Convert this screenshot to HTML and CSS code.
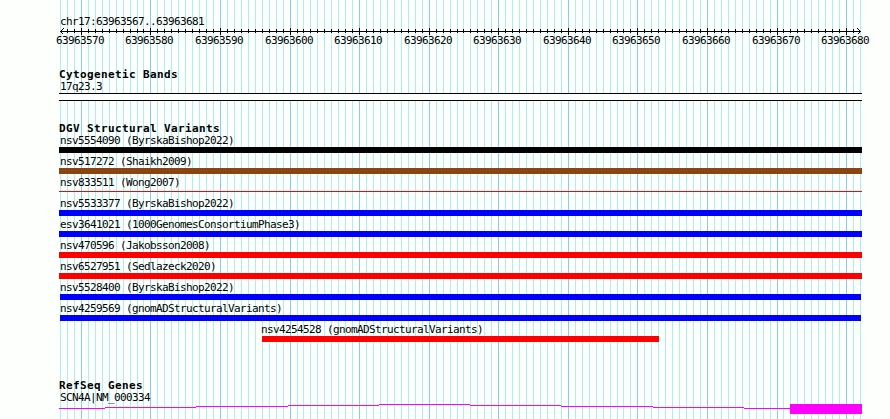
FILE: index.html
```html
<!DOCTYPE html>
<html lang="en">

<head>
    <meta charset="UTF-8" />
    <title>chr17:63963567..63963681</title>
    <link rel="stylesheet" href="styles.css">
</head>

<body>
    <div class="browser">
        <svg class="grid" width="890" height="419">
            <path id="gridMinor" class="grid-minor" />
            <path id="gridMajor" class="grid-major" />
        </svg>

        <div class="panel">
            <!-- Ruler -->
            <header class="ruler">
                <p class="label">chr17:63963567..63963681</p>
                <svg class="scale" width="831" height="9">
                    <path class="scale-line" d="M1 4.5H802" />
                    <path id="scaleTicks" class="scale-line" />
                    <path class="arrow" d="M4.5 1.5L1.5 4.5L4.5 7.5M798.5 1.5L801.5 4.5L798.5 7.5" />
                </svg>
                <svg class="numbers" id="numbers" width="831" height="13"></svg>
            </header>

            <!-- Cytogenetic Bands -->
            <section class="track bands">
                <h2>Cytogenetic Bands</h2>
                <p class="label">17q23.3</p>
                <div class="band"></div>
            </section>

            <!-- Structural Variants -->
            <section class="track variants">
                <h2>DGV Structural Variants</h2>
                <div class="feature">
                    <p class="label">nsv5554090 (ByrskaBishop2022)</p>
                    <div class="bar black"></div>
                </div>
                <div class="feature">
                    <p class="label">nsv517272 (Shaikh2009)</p>
                    <div class="bar brown"></div>
                </div>
                <div class="feature">
                    <p class="label">nsv833511 (Wong2007)</p>
                    <div class="bar thin"></div>
                </div>
                <div class="feature">
                    <p class="label">nsv5533377 (ByrskaBishop2022)</p>
                    <div class="bar blue"></div>
                </div>
                <div class="feature">
                    <p class="label">esv3641021 (1000GenomesConsortiumPhase3)</p>
                    <div class="bar blue"></div>
                </div>
                <div class="feature">
                    <p class="label">nsv470596 (Jakobsson2008)</p>
                    <div class="bar red"></div>
                </div>
                <div class="feature">
                    <p class="label">nsv6527951 (Sedlazeck2020)</p>
                    <div class="bar red"></div>
                </div>
                <div class="feature">
                    <p class="label">nsv5528400 (ByrskaBishop2022)</p>
                    <div class="bar blue inset"></div>
                </div>
                <div class="feature">
                    <p class="label">nsv4259569 (gnomADStructuralVariants)</p>
                    <div class="bar blue inset"></div>
                </div>
                <div class="feature partial">
                    <p class="label">nsv4254528 (gnomADStructuralVariants)</p>
                    <div class="bar red"></div>
                </div>
            </section>

            <!-- Genes -->
            <section class="track genes">
                <h2>RefSeq Genes</h2>
                <p class="label">SCN4A|NM_000334</p>
                <svg class="gene" width="803" height="10">
                    <path class="intron" d="M0 4.5H46M46 3.5H137M137 2.5H229M229 1.5H320M320 0.5H411M411 1.5H502M502 2.5H594M594 3.5H685M685 4.5H731" />
                    <rect class="exon" x="731" y="0" width="72" height="10" />
                </svg>
            </section>
        </div>
    </div>

    <script src="script.js"></script>
</body>

</html>
```
FILE: styles.css
```css
body {
    margin: 0;
    background-color: #fdfffc;
    color: #000;
    font-family: "DejaVu Sans Mono", monospace;
    font-size: 11px;
    line-height: 13px;
}

.browser {
    position: relative;
    width: 890px;
    height: 419px;
    overflow: hidden;
}

/* Vertical guides behind every track */
.grid {
    position: absolute;
    top: 0;
    left: 0;
}

.grid path {
    fill: none;
    stroke-width: 1;
    shape-rendering: crispEdges;
}

.grid-minor {
    stroke: #afeeee;
}

.grid-major {
    stroke: #87ceeb;
}

.panel {
    position: relative;
    padding: 15px 0 0 59px;
}

.panel svg {
    display: block;
}

h2,
.label {
    margin: 0;
    white-space: pre;
    height: 12px;
}

h2 {
    font-size: 11px;
    line-height: 13px;
    font-weight: bold;
    letter-spacing: 0.377px;
}

.label {
    padding-left: 1px;
    letter-spacing: -0.622px;
}

/* Ruler */
.ruler {
    height: 53px;
}

.scale {
    shape-rendering: crispEdges;
}

.scale-line,
.arrow {
    fill: none;
    stroke: #000;
}

.numbers {
    overflow: visible;
    letter-spacing: -0.622px;
}

/* Tracks */
.track {
    width: 803px;
}

.bands {
    height: 54px;
}

.band {
    height: 6px;
    margin-top: 1px;
    border-top: 1px solid #000;
    border-bottom: 1px solid #000;
    background-color: #fdfffc;
}

.variants {
    height: 257px;
}

.feature {
    height: 21px;
}

.bar {
    height: 6px;
    margin-top: 1px;
}

.black {
    background-color: #000;
}

.brown {
    background-color: #8b4513;
}

.blue {
    background-color: #00f;
}

.red {
    background-color: #f00;
}

.thin {
    height: 1px;
    margin-top: 3px;
    background-color: #f00;
}

.inset {
    margin-left: 1px;
    margin-right: 1px;
}

.partial {
    width: 397px;
    margin-left: 203px;
}

.partial .label {
    padding-left: 0;
    margin-left: -1px;
}

/* Genes */
.gene {
    margin-top: 1px;
    shape-rendering: crispEdges;
}

.intron {
    fill: none;
    stroke: #f0f;
}

.exon {
    fill: #f0f;
}
```
FILE: script.js
```javascript
const start = 63963567;
const bases = 115;
const left = 60;
const width = 800;
const panelLeft = 59;

let minor = "";
let major = "";
let ticks = "";
const numbers = document.getElementById("numbers");

for (let i = 0; i <= bases; i++) {
    const x = Math.round(left + i * width / bases);
    const tickX = x - panelLeft + 0.5;

    if ((start + i) % 10 === 0) {
        major += `M${x + 0.5} 0V419`;
        ticks += `M${tickX} 1V8`;

        const text = document.createElementNS("http://www.w3.org/2000/svg", "text");
        text.setAttribute("x", x - panelLeft - 25);
        text.setAttribute("y", 8);
        text.textContent = start + i;
        numbers.appendChild(text);
    } else {
        minor += `M${x + 0.5} 0V419`;
        if (i > 0 && i < bases) {
            ticks += `M${tickX} 2V6`;
        }
    }
}

document.getElementById("gridMinor").setAttribute("d", minor);
document.getElementById("gridMajor").setAttribute("d", major);
document.getElementById("scaleTicks").setAttribute("d", ticks);
```
